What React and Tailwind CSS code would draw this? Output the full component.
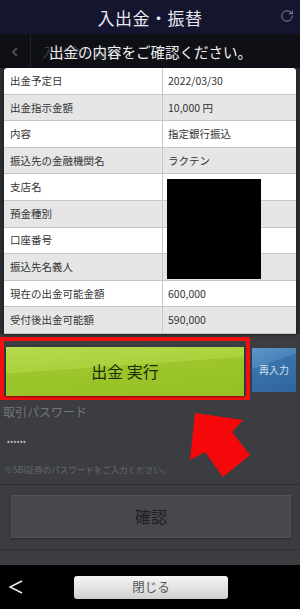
import React from "react";
import { RotateCw } from "lucide-react";

const rows = [
  ["出金予定日", "2022/03/30"],
  ["出金指示金額", "10,000 円"],
  ["内容", "指定銀行振込"],
  ["振込先の金融機関名", "ラクテン"],
  ["支店名", ""],
  ["預金種別", ""],
  ["口座番号", ""],
  ["振込先名義人", ""],
  ["現在の出金可能金額", "600,000"],
  ["受付後出金可能額", "590,000"],
];

export default function App() {
  return (
    <div className="relative w-[300px] h-[609px] overflow-hidden flex flex-col bg-[#3b3d40] font-['Noto_Sans_CJK_JP','Noto_Sans',sans-serif]">
      {/* Header */}
      <div className="relative h-[34px] shrink-0 bg-[#15152f] flex items-center justify-center">
        <span className="text-[17px] leading-none text-[#e9e9f0] tracking-[0.5px]">入出金・振替</span>
        <div className="absolute right-[6px] top-[9px] text-[#8e8fa3]">
          <RotateCw size={14} strokeWidth={1.6} />
        </div>
      </div>

      {/* Sub header */}
      <div className="relative h-[34px] shrink-0 bg-[#0e1016] flex items-center">
        <div className="w-[31px] h-full flex items-center justify-center border-r border-[#20232a]">
          <svg width="8" height="10" viewBox="0 0 8 10" className="mt-[2px]">
            <polyline points="6,1 2,5 6,9" fill="none" stroke="#4a4d55" strokeWidth="1.8" />
          </svg>
        </div>
        <span className="ml-[11px] mt-[2px] text-[13px] text-[#3a3d44]">入出金・振替</span>
        <span className="absolute left-[49px] top-[9px] text-[14.5px] leading-[18px] text-[#f2f2f2]">
          出金の内容をご確認ください。
        </span>
      </div>

      {/* Confirmation table */}
      <div className="shrink-0 bg-[#2a2c2f] px-[4px]">
        <div className="relative rounded-t-[4px] overflow-hidden bg-white shadow-[0_1px_3px_rgba(0,0,0,0.5)]">
          {rows.map(([label, value], i) => (
            <div
              key={label}
              className={`h-[26.6px] flex border-b border-[#c7c7c7] text-[10.5px] text-[#333] ${i % 2 === 1 ? "bg-[#e6e6e6]" : "bg-white"}`}
            >
              <div className="w-[159px] shrink-0 flex items-center pl-[6px] border-r border-[#c7c7c7]">{label}</div>
              <div className="flex-1 flex items-center pl-[5px]">{value}</div>
            </div>
          ))}
          <div className="absolute left-[163px] top-[111px] w-[94px] h-[100px] bg-black" />
        </div>
      </div>

      {/* Buttons */}
      <div className="shrink-0 mt-[3px] flex items-start">
        <div className="w-[250px] h-[63px] border-[4px] border-[#f01010] p-[2px] pt-[6px]">
          <button className="w-full h-[49px] flex items-center justify-center bg-[linear-gradient(176deg,#b6d94c_0%,#aad23c_40%,#9cc62c_41%,#94c026_100%)] text-[16px] text-[#1d2a08] shadow-[0_1px_2px_rgba(0,0,0,0.5)]">
            出金 実行
          </button>
        </div>
        <button className="ml-[2px] mt-[11px] w-[44px] h-[44px] flex items-center justify-center bg-[linear-gradient(160deg,#5f95c6_0%,#4a84bb_35%,#3a73aa_36%,#2f659c_100%)] text-[10px] text-[#d2e1ef]">
          再入力
        </button>
      </div>

      {/* Password section (dimmed page) */}
      <div className="shrink-0 mt-[4px] pl-[3px] text-[12px] leading-[16px] text-[#74767a]">取引パスワード</div>
      <div className="shrink-0 mt-[15px] pl-[7px] text-[8px] leading-[12px] tracking-[0.5px] text-[#b9babd]">••••••</div>
      <div className="shrink-0 mt-[16px] pl-[4px] text-[8.5px] leading-[12px] text-[#66686c]">※SBI証券のパスワードをご入力ください。</div>
      <div className="shrink-0 mt-[9px] h-px bg-[#2e3033]" />
      <div className="shrink-0 mt-[10px] mx-[11px] mr-[9px] h-[43px] flex items-center justify-center bg-[#47484b] border border-[#535457] shadow-[0_1px_2px_rgba(0,0,0,0.4)] text-[16px] text-[#1f2022]">
        確認
      </div>
      <div className="shrink-0 mt-[11px] h-px bg-[#2e3033]" />

      {/* Bottom bar */}
      <div className="mt-auto h-[44px] shrink-0 bg-black flex items-center">
        <div className="w-[32px] flex justify-center">
          <svg width="16" height="16" viewBox="0 0 16 16">
            <polyline points="14,2 2,8 14,14" fill="none" stroke="#f2f2f2" strokeWidth="1.4" />
          </svg>
        </div>
        <button className="ml-[42px] w-[154px] h-[23px] rounded-[3px] flex items-center justify-center bg-[linear-gradient(180deg,#f4f4f4_0%,#e2e2e2_55%,#cfcfcf_100%)] text-[12.5px] text-[#555]">
          閉じる
        </button>
      </div>

      {/* Red annotation arrow */}
      <svg className="absolute left-0 top-0 pointer-events-none" width="300" height="609" viewBox="0 0 300 609">
        <polygon points="195,413 243,420 232,432 250,455 223,477 205,452 190,460" fill="#f5080a" />
      </svg>
    </div>
  );
}
